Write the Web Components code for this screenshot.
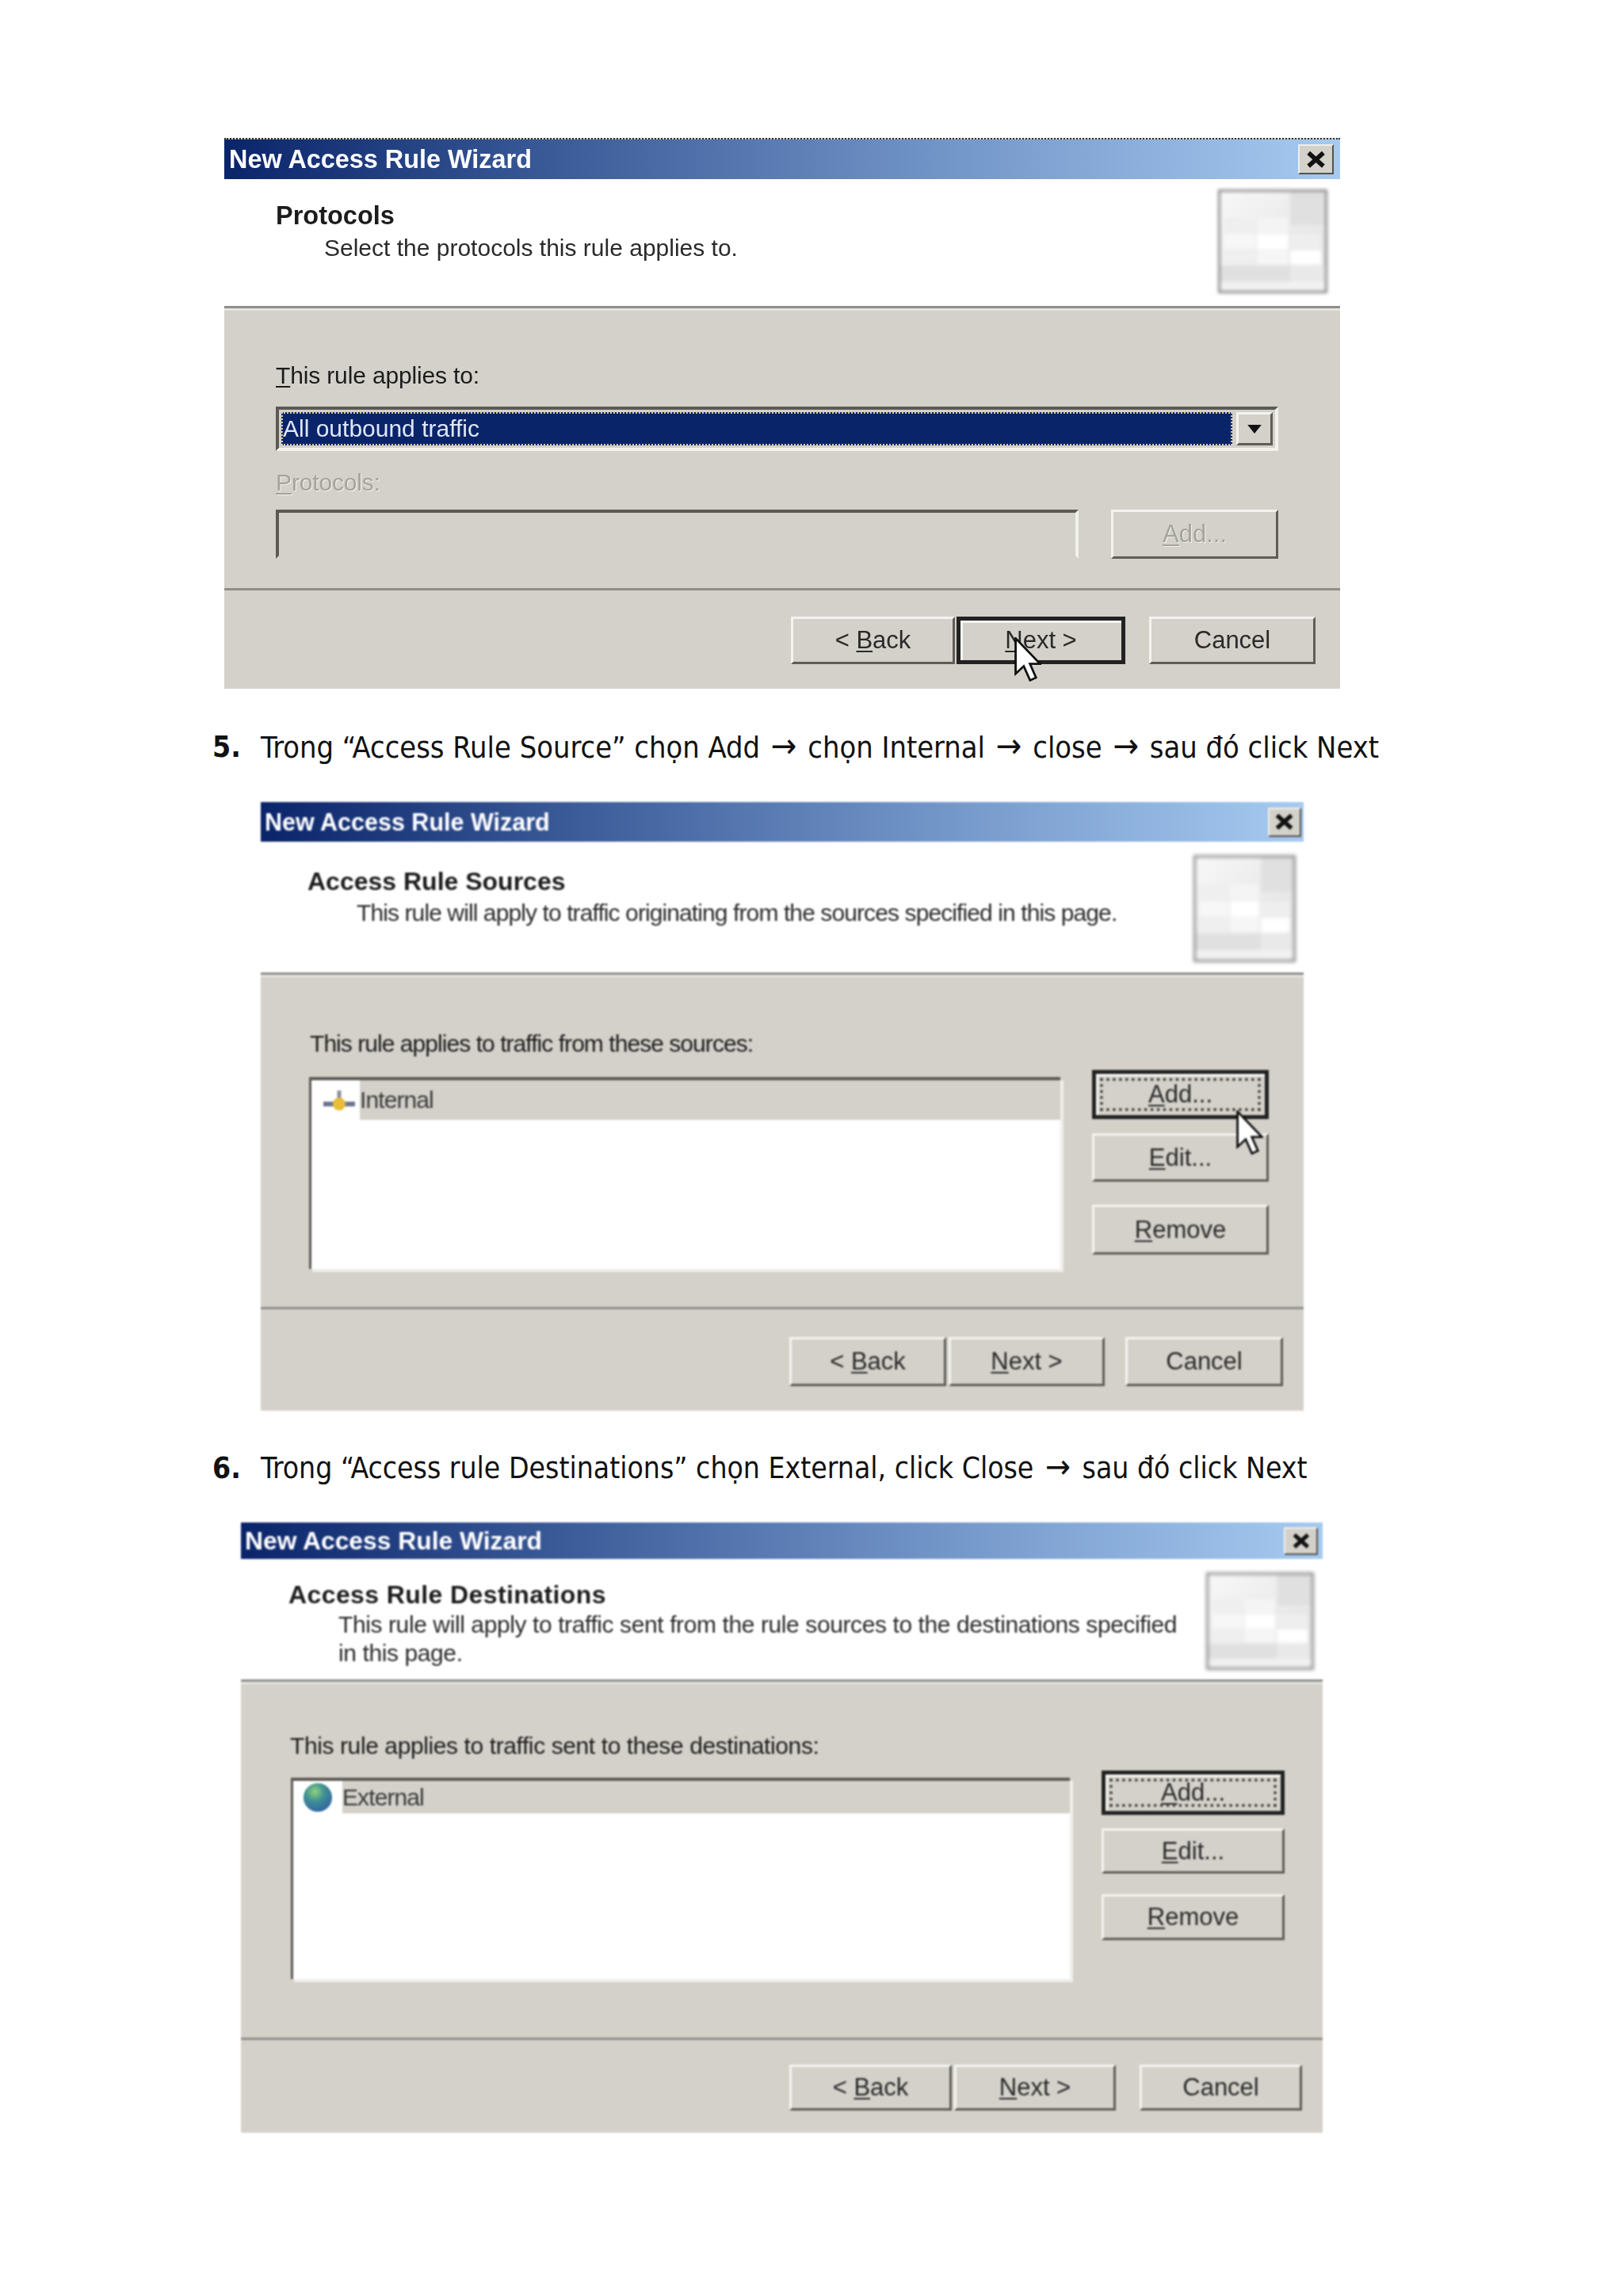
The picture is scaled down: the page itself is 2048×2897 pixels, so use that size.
<!DOCTYPE html>
<html lang="vi">
<head>
<meta charset="utf-8">
<title>New Access Rule Wizard</title>
<style>
  html, body { margin: 0; background: #fff; }
  body { width: 2048px; min-height: 2897px; font-family: "Liberation Sans", Arial, sans-serif; }
  .page { display: flow-root; padding-top: 176px; padding-bottom: 204px; }
  u { text-decoration-thickness: 2px; text-underline-offset: 3px; }
  .arrow { font-size: 1.15em; margin: 0 3px; line-height: 1; }
</style>
</head>
<body>

<template id="wizard-dialog-tpl">
  <style>
    :host {
      display: flex;
      flex-direction: column;
      position: relative;
      box-sizing: border-box;
      background: #d4d1ca;
      color: #1c1c1c;
      font-family: "Liberation Sans", Arial, sans-serif;
      filter: blur(var(--soft, 0.7px));
    }
    .title {
      display: flex;
      justify-content: space-between;
      align-items: center;
      box-sizing: border-box;
      height: var(--title-h);
      padding: var(--title-pad);
      background: linear-gradient(90deg, #0a246a 0%, #3f5f9c 32%, #7396c9 65%, #a6caf0 100%);
      color: #fff;
      font-weight: bold;
      font-size: var(--title-fs);
    }
    .close {
      display: flex;
      align-items: center;
      justify-content: center;
      box-sizing: border-box;
      flex: none;
      width: var(--close-w);
      height: var(--close-h);
      background: #d4d1ca;
      border: 2px solid;
      border-color: #efeee9 #55534e #55534e #efeee9;
    }
    .close svg { width: 66%; height: 66%; }
    .head {
      display: flex;
      box-sizing: border-box;
      height: var(--head-h);
      background: #fff;
      padding: var(--head-pad);
      border-bottom: 3px solid #8f8e8a;
    }
    .head-text { flex: 1; min-width: 0; }
    .heading {
      font-weight: bold;
      font-size: var(--heading-fs);
      letter-spacing: var(--heading-ls);
      line-height: 40px;
      height: 40px;
      white-space: nowrap;
    }
    .desc {
      margin: var(--desc-m);
      font-size: 30px;
      letter-spacing: var(--desc-ls);
      line-height: var(--desc-lh);
      white-space: nowrap;
      color: #2a2a2a;
    }
    .body {
      box-sizing: border-box;
      flex: 1;
      padding: var(--body-pad);
      border-top: 3px solid #e6e4df;
      font-size: 30px;
    }
    .foot {
      display: flex;
      justify-content: flex-end;
      box-sizing: border-box;
      height: var(--foot-h);
      padding: var(--foot-pad);
      border-top: 3px solid #8f8e8a;
    }
  </style>
  <div class="title">
    <span class="title-text"></span>
    <span class="close"><svg viewBox="0 0 12 12"><path d="M1 1.5 L11 10.5 M11 1.5 L1 10.5" stroke="#111" stroke-width="3" fill="none"/></svg></span>
  </div>
  <div class="head">
    <div class="head-text">
      <div class="heading"></div>
      <div class="desc"><slot name="desc"></slot></div>
    </div>
    <slot name="logo"></slot>
  </div>
  <div class="body"><slot></slot></div>
  <div class="foot"><slot name="buttons"></slot></div>
  <slot name="overlay"></slot>
</template>

<template id="win-button-tpl">
  <style>
    :host {
      display: flex;
      box-sizing: border-box;
      align-items: center;
      justify-content: center;
      flex: none;
      background: #d4d1ca;
      color: #2a2a2a;
      font-family: "Liberation Sans", Arial, sans-serif;
      font-size: 31px;
      border: 3px solid;
      border-color: #f4f3ef #5f5d58 #5f5d58 #f4f3ef;
      white-space: nowrap;
      position: relative;
    }
    :host([default]) { border: 5px solid #222; box-shadow: inset 0 3px 0 #f4f3ef, inset 3px 0 0 #f4f3ef; }
    :host([disabled]) { color: #a5a39d; text-shadow: 1px 1px 0 #f2f1ec; }
    .ring { display: none; position: absolute; inset: 5px; border: 4px dotted #4c4b48; }
    :host([focused]) .ring { display: block; }
  </style>
  <div class="ring"></div>
  <slot></slot>
</template>

<template id="step-line-tpl">
  <style>
    :host {
      display: flex;
      align-items: center;
      height: 50px;
      color: #111;
      font-family: "DejaVu Sans Condensed", "DejaVu Sans", sans-serif;
      font-stretch: condensed;
      font-size: 37px;
      white-space: nowrap;
    }
    .num { width: 61px; font-weight: bold; font-size: 37px; }
  </style>
  <span class="num"></span><span><slot></slot></span>
</template>

<template id="fade-logo-tpl">
  <style>
    :host {
      display: block;
      box-sizing: border-box;
      flex: none;
      border: 3px solid #8c8c8c;
      background: #eee;
      filter: blur(2px);
    }
    svg { display: block; width: 100%; height: 100%; }
  </style>
  <svg viewBox="0 0 285 285" preserveAspectRatio="none">
    <defs>
      <linearGradient id="g" x1="0" y1="0" x2="1" y2="1">
        <stop offset="0" stop-color="#f8f8f8"/>
        <stop offset="0.5" stop-color="#ebebeb"/>
        <stop offset="1" stop-color="#e0e0e0"/>
      </linearGradient>
    </defs>
    <rect width="285" height="285" fill="url(#g)"/>
    <rect x="190" y="0" width="95" height="95" fill="#e0e0e0"/>
    <rect x="10" y="75" width="85" height="45" fill="#efefef"/>
    <rect x="100" y="75" width="85" height="45" fill="#f4f4f4"/>
    <rect x="10" y="122" width="85" height="42" fill="#f7f7f7"/>
    <rect x="100" y="122" width="85" height="44" fill="#ffffff"/>
    <rect x="190" y="122" width="85" height="44" fill="#eeeeee"/>
    <rect x="10" y="168" width="85" height="42" fill="#efefef"/>
    <rect x="100" y="168" width="85" height="42" fill="#f6f6f6"/>
    <rect x="190" y="168" width="85" height="42" fill="#ffffff"/>
    <rect x="0" y="212" width="285" height="73" fill="#e0e0e0"/>
    <rect x="190" y="212" width="95" height="60" fill="#e9e9e9"/>
    <rect x="0" y="258" width="285" height="27" fill="#f1f1f1"/>
  </svg>
</template>

<template id="rule-form-tpl">
  <style>
    :host { display: block; }
    u { text-decoration-thickness: 2px; text-underline-offset: 3px; }
    .label { height: 40px; line-height: 40px; letter-spacing: -0.15px; }
    .combo {
      display: flex;
      box-sizing: border-box;
      height: 56px;
      margin-top: 19px;
      padding: 3px;
      border: 4px solid;
      border-color: #5c5a55 #f2f1ec #f2f1ec #5c5a55;
    }
    .value {
      flex: 1;
      display: flex;
      align-items: center;
      padding-left: 2px;
      background: #0a246a;
      color: #dfe6f5;
      outline: 2px dotted #d4c9a0;
      outline-offset: -2px;
    }
    .arrow {
      display: flex;
      align-items: center;
      justify-content: center;
      box-sizing: border-box;
      width: 46px;
      margin-left: 5px;
      background: #d4d1ca;
      border: 3px solid;
      border-color: #f4f3ef #5f5d58 #5f5d58 #f4f3ef;
    }
    .arrow svg { width: 20px; height: 11px; }
    .disabled { margin-top: 20px; color: #a5a39d; text-shadow: 1px 1px 0 #f2f1ec; }
    .row { display: flex; justify-content: space-between; margin-top: 14px; }
    .field {
      box-sizing: border-box;
      width: 1013px;
      height: 62px;
      border: 4px solid;
      border-color: #5c5a55 #f2f1ec #d4d1ca #5c5a55;
    }
  </style>
  <div class="label"><u>T</u>his rule applies to:</div>
  <div class="combo">
    <div class="value">All outbound traffic</div>
    <div class="arrow"><svg viewBox="0 0 18 10"><path d="M1 0 H17 L9 10 Z" fill="#111"/></svg></div>
  </div>
  <div class="label disabled"><u>P</u>rotocols:</div>
  <div class="row">
    <div class="field"></div>
    <slot></slot>
  </div>
</template>

<template id="rule-list-tpl">
  <style>
    :host { display: block; }
    .label { height: 40px; line-height: 40px; white-space: nowrap; letter-spacing: var(--label-ls); }
    .row { display: flex; justify-content: space-between; margin: var(--row-m); }
    .list {
      box-sizing: border-box;
      margin-top: 9px;
      width: var(--list-w);
      height: var(--list-h);
      background: #fff;
      border: solid;
      border-width: 4px 0 0 3px;
      border-color: #5c5a55;
      box-shadow: 4px 4px 0 #efeeea;
    }
    .item { display: flex; align-items: center; height: var(--item-h); }
    .icon { display: flex; align-items: center; justify-content: center; box-sizing: border-box; flex: none; width: var(--icon-w); height: 100%; padding: var(--icon-pad, 0); }
    .name {
      flex: 1;
      align-self: stretch;
      display: flex;
      align-items: center;
      background: #d4d1ca;
      color: #3a3a3a;
      letter-spacing: -0.9px;
    }
    .cols { display: flex; flex-direction: column; width: var(--col-w); }
  </style>
  <div class="label"></div>
  <div class="row">
    <div class="list">
      <div class="item">
        <div class="icon"><slot name="icon"></slot></div>
        <div class="name"></div>
      </div>
    </div>
    <div class="cols"><slot></slot></div>
  </div>
</template>

<template id="mouse-cursor-tpl">
  <style>
    :host { display: block; position: absolute; width: 34px; height: 56px; filter: drop-shadow(0 0 0.5px #000); }
    svg { display: block; width: 100%; height: 100%; }
  </style>
  <svg viewBox="0 0 12 20" preserveAspectRatio="none">
    <path d="M0.6 0.6 V16.4 L4.2 13 L7 19.4 L9.6 18.2 L6.9 12 H11.4 Z" fill="#fff" stroke="#111" stroke-width="0.9" stroke-linejoin="miter"/>
  </svg>
</template>

<script>
  // every element clones its template into an open shadow root
  function shadowFrom(el, id) {
    el.attachShadow({ mode: "open" });
    el.shadowRoot.appendChild(document.getElementById(id).content.cloneNode(true));
    return el.shadowRoot;
  }

  class WizardDialog extends HTMLElement {
    constructor() {
      super();
      const root = shadowFrom(this, "wizard-dialog-tpl");
      root.querySelector(".title-text").textContent = "New Access Rule Wizard";
      this.root = root;
    }
    connectedCallback() {
      this.root.querySelector(".heading").textContent = this.getAttribute("heading");
    }
  }

  class WinButton extends HTMLElement {
    constructor() {
      super();
      shadowFrom(this, "win-button-tpl");
    }
  }

  class StepLine extends HTMLElement {
    constructor() {
      super();
      this.root = shadowFrom(this, "step-line-tpl");
    }
    connectedCallback() {
      this.root.querySelector(".num").textContent = this.getAttribute("num");
    }
  }

  class FadeLogo extends HTMLElement {
    constructor() {
      super();
      shadowFrom(this, "fade-logo-tpl");
    }
  }

  class RuleForm extends HTMLElement {
    constructor() {
      super();
      shadowFrom(this, "rule-form-tpl");
    }
  }

  class RuleList extends HTMLElement {
    constructor() {
      super();
      this.root = shadowFrom(this, "rule-list-tpl");
    }
    connectedCallback() {
      this.root.querySelector(".label").textContent = this.getAttribute("label");
      this.root.querySelector(".name").textContent = this.getAttribute("item");
    }
  }

  class MouseCursor extends HTMLElement {
    constructor() {
      super();
      shadowFrom(this, "mouse-cursor-tpl");
    }
  }

  customElements.define("wizard-dialog", WizardDialog);
  customElements.define("win-button", WinButton);
  customElements.define("step-line", StepLine);
  customElements.define("fade-logo", FadeLogo);
  customElements.define("rule-form", RuleForm);
  customElements.define("rule-list", RuleList);
  customElements.define("mouse-cursor", MouseCursor);
</script>

<div class="page">

  <wizard-dialog heading="Protocols" style="margin-left:283px;width:1408px;height:695px;--soft:0.6px;
    --title-h:50px;--title-pad:0 8px 0 6px;--title-fs:32.4px;--close-w:45px;--close-h:38px;
    --head-h:163px;--head-pad:26px 16px 0 65px;--heading-fs:32.5px;--heading-ls:0;--desc-m:2px 0 0 61px;--desc-ls:0;--desc-lh:38px;
    --body-pad:62px 78px 0 65px;--foot-h:127px;--foot-pad:33px 31px 0 0;border-top:2px dotted #333;margin-top:-2px;">
    <span slot="desc">Select the protocols this rule applies to.</span>
    <fade-logo slot="logo" style="width:138px;height:131px;margin-top:-13px"></fade-logo>
    <rule-form>
      <win-button disabled style="width:211px;height:62px"><span><u>A</u>dd...</span></win-button>
    </rule-form>
    <win-button slot="buttons" style="width:207px;height:60px">&lt;&nbsp;<u>B</u>ack</win-button>
    <win-button slot="buttons" default style="width:213px;height:60px;margin-left:2px"><span><u>N</u>ext &gt;</span></win-button>
    <win-button slot="buttons" style="width:210px;height:60px;margin-left:30px">Cancel</win-button>
    <mouse-cursor slot="overlay" style="left:997px;top:628px"></mouse-cursor>
  </wizard-dialog>

  <step-line num="5." style="margin:48px 0 0 268px;font-size:37.7px">Trong “Access Rule Source” chọn Add <span class="arrow">→</span> chọn Internal <span class="arrow">→</span> close <span class="arrow">→</span> sau đó click Next</step-line>

  <wizard-dialog heading="Access Rule Sources" style="margin:45px 0 0 329px;width:1316px;height:768px;--soft:0.9px;
    --title-h:50px;--title-pad:0 3px 0 5px;--title-fs:30.5px;--close-w:42px;--close-h:37px;
    --head-h:168px;--head-pad:30px 10px 0 59px;--heading-fs:32px;--heading-ls:0;--desc-m:0 0 0 62px;--desc-ls:-0.9px;--desc-lh:40px;
    --body-pad:64px 44px 0 62px;--foot-h:131px;--foot-pad:35px 26px 0 0;">
    <span slot="desc">This rule will apply to traffic originating from the sources specified in this page.</span>
    <fade-logo slot="logo" style="width:129px;height:135px;margin-top:-13px"></fade-logo>
    <rule-list label="This rule applies to traffic from these sources:" item="Internal" style="--label-ls:-0.95px;--row-m:13px 0 0 -1px;--list-w:948px;--list-h:242px;--item-h:50px;--icon-w:61px;--icon-pad:0 0 0 8px;--col-w:223px">
      <svg slot="icon" viewBox="0 0 44 28" width="44" height="28">
        <path d="M2 19 H42" stroke="#6f7690" stroke-width="6"/>
        <path d="M22 2 V14" stroke="#8b8f9c" stroke-width="5"/>
        <ellipse cx="22" cy="19" rx="8" ry="8" fill="#e9bd36"/>
      </svg>
      <win-button default focused style="height:62px"><span><u>A</u>dd...</span></win-button>
      <win-button style="height:61px;margin-top:18px"><span><u>E</u>dit...</span></win-button>
      <win-button style="height:63px;margin-top:29px"><span><u>R</u>emove</span></win-button>
    </rule-list>
    <win-button slot="buttons" style="width:198px;height:62px">&lt;&nbsp;<u>B</u>ack</win-button>
    <win-button slot="buttons" style="width:197px;height:62px;margin-left:3px"><span><u>N</u>ext &gt;</span></win-button>
    <win-button slot="buttons" style="width:199px;height:62px;margin-left:26px">Cancel</win-button>
    <mouse-cursor slot="overlay" style="left:1231px;top:389px"></mouse-cursor>
  </wizard-dialog>

  <step-line num="6." style="margin:47px 0 0 268px">Trong “Access rule Destinations” chọn External, click Close <span class="arrow" style="margin:0 4px">→</span> sau đó click Next</step-line>

  <wizard-dialog heading="Access Rule Destinations" style="margin:44px 0 0 304px;width:1365px;height:770px;--soft:1px;
    --title-h:46px;--title-pad:0 6px 0 5px;--title-fs:31.8px;--close-w:43px;--close-h:35px;
    --head-h:155px;--head-pad:25px 11px 0 60px;--heading-fs:32px;--heading-ls:0.4px;--desc-m:0 0 0 63px;--desc-ls:-0.4px;--desc-lh:36px;
    --body-pad:58px 48px 0 62px;--foot-h:120px;--foot-pad:31px 26px 0 0;">
    <span slot="desc">This rule will apply to traffic sent from the rule sources to the destinations specified<br>in this page.</span>
    <fade-logo slot="logo" style="width:136px;height:123px;margin-top:-8px"></fade-logo>
    <rule-list label="This rule applies to traffic sent to these destinations:" item="External" style="--label-ls:-0.4px;--row-m:11px 0 0 1px;--list-w:983px;--list-h:254px;--item-h:41px;--icon-w:62px;--col-w:231px">
      <svg slot="icon" viewBox="0 0 40 40" width="40" height="38">
        <defs>
          <radialGradient id="globe" cx="0.4" cy="0.3" r="0.75">
            <stop offset="0" stop-color="#8fd47e"/>
            <stop offset="0.45" stop-color="#3f8f92"/>
            <stop offset="1" stop-color="#2f62a8"/>
          </radialGradient>
        </defs>
        <circle cx="20" cy="20" r="19" fill="url(#globe)"/>
      </svg>
      <win-button default focused style="height:56px"><span><u>A</u>dd...</span></win-button>
      <win-button style="height:57px;margin-top:17px"><span><u>E</u>dit...</span></win-button>
      <win-button style="height:58px;margin-top:26px"><span><u>R</u>emove</span></win-button>
    </rule-list>
    <win-button slot="buttons" style="width:205px;height:58px">&lt;&nbsp;<u>B</u>ack</win-button>
    <win-button slot="buttons" style="width:204px;height:58px;margin-left:3px"><span><u>N</u>ext &gt;</span></win-button>
    <win-button slot="buttons" style="width:205px;height:58px;margin-left:30px">Cancel</win-button>
  </wizard-dialog>

</div>
</body>
</html>
